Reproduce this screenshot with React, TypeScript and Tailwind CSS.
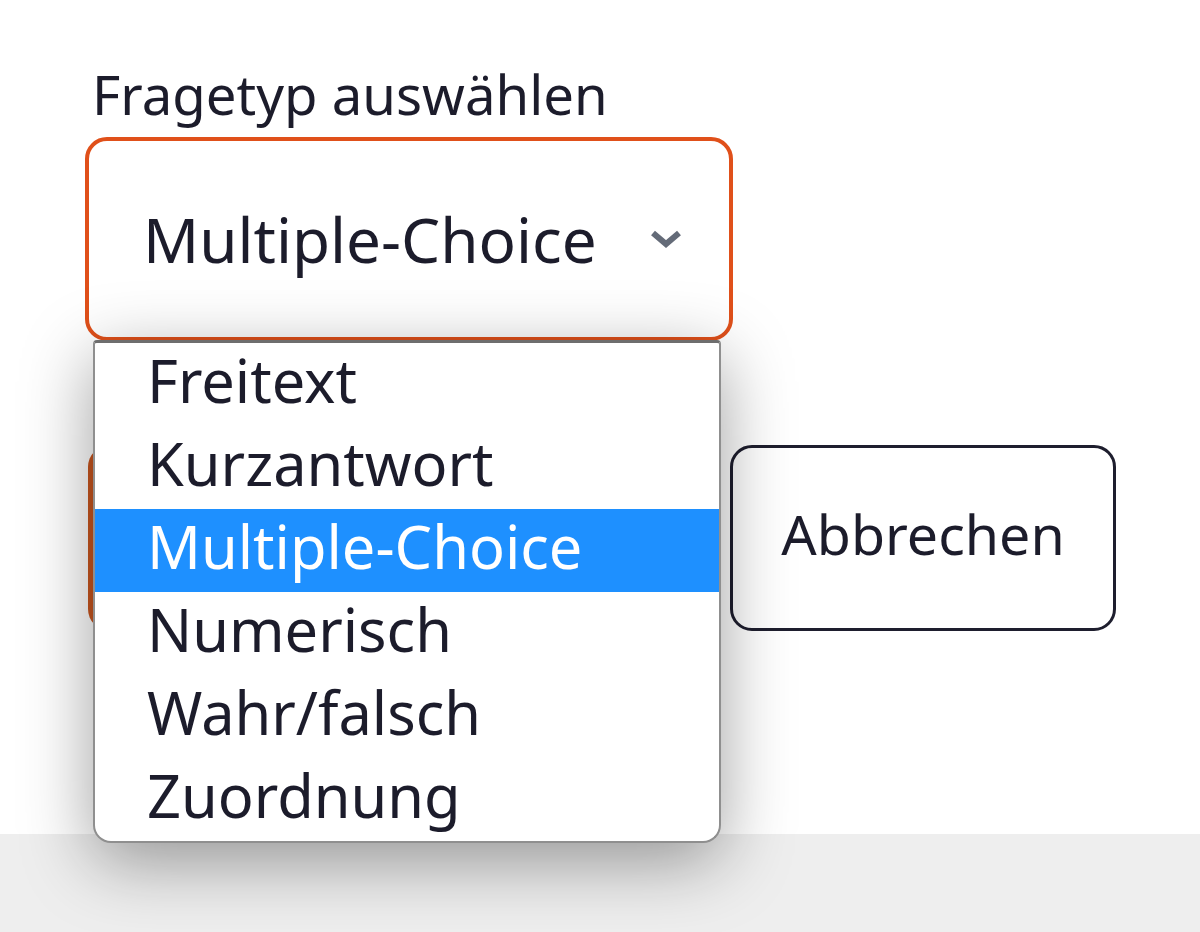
const options = ["Freitext", "Kurzantwort", "Multiple-Choice", "Numerisch", "Wahr/falsch", "Zuordnung"];
const selected = "Multiple-Choice";

function Chevron() {
  return (
    <svg width="34" height="20" viewBox="0 0 34 20" className="shrink-0">
      <path d="M4 4 L17 15 L30 4" fill="none" stroke="#646b78" strokeWidth="6" strokeLinejoin="miter" />
    </svg>
  );
}

export default function App() {
  return (
    <div className="relative h-[932px] w-[1200px] overflow-hidden bg-white font-['Noto_Sans',sans-serif] text-[#1c1c2b]">
      <div className="flex h-[834px] flex-col pl-[85px] pt-[62px]">
        <label className="pl-[7px] text-[54.5px] leading-[64px]">Fragetyp auswählen</label>

        <div className="mt-[11px] flex h-[204px] w-[648px] items-center justify-between rounded-[22px] border-[4px] border-[#e0501a] pl-[54px] pr-[46px]">
          <span className="text-[62px] leading-none">{selected}</span>
          <Chevron />
        </div>

        <div className="mt-[104px] flex items-center gap-[30px] pl-[3px]">
          {/* save button, mostly hidden under the open list */}
          <div className="h-[186px] w-[612px] rounded-[22px] bg-[#c9561f]" />
          <button className="h-[186px] w-[386px] rounded-[22px] border-[3px] border-[#1e1e2e] bg-white pb-[8px] text-[55.5px]">Abbrechen</button>
        </div>
      </div>

      <div className="h-[98px] bg-[#eeeeee]" />

      {/* open native list */}
      <div className="absolute left-[93px] top-[340px] w-[628px] overflow-hidden rounded-b-[18px] rounded-t-[4px] border-2 border-t-[3px] border-[#8f8f8f] border-t-[#6e6e6e] bg-white shadow-[0_18px_70px_rgba(0,0,0,0.38)]">
        {options.map((o) => (
          <div
            key={o}
            className={
              o === selected
                ? "flex h-[83px] items-center bg-[#1e90ff] pb-[10px] pl-[52px] text-[59.5px] leading-none text-white"
                : "flex h-[83px] items-center pb-[10px] pl-[52px] text-[59.5px] leading-none"
            }
          >
            {o}
          </div>
        ))}
      </div>
    </div>
  );
}
